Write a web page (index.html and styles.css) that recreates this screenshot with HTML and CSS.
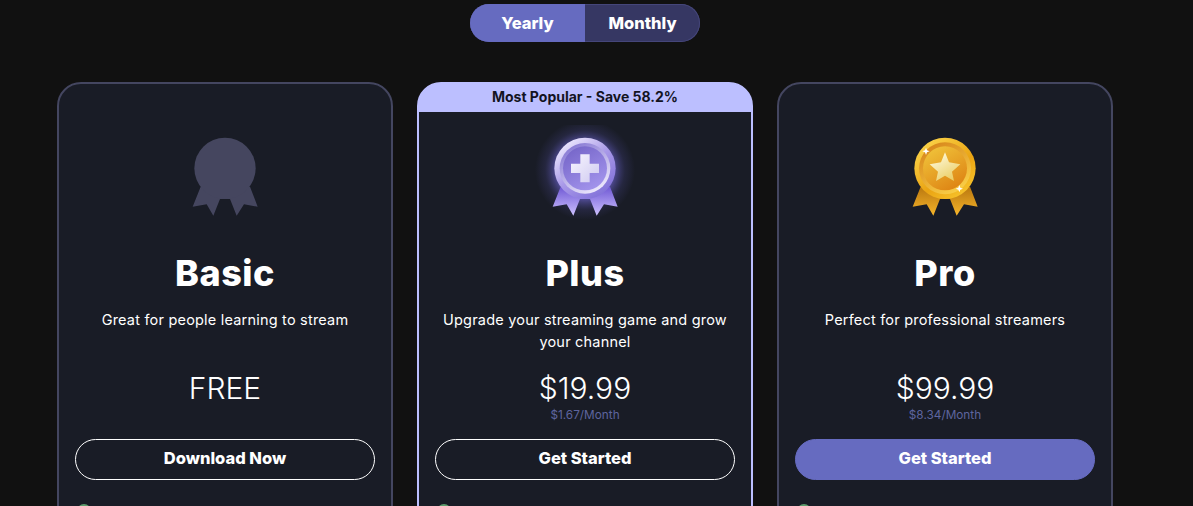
FILE: index.html
```html
<!DOCTYPE html>
<html lang="en">
<head>
<meta charset="utf-8">
<title>Pricing</title>
<link rel="stylesheet" href="styles.css">
</head>
<body>
<main class="page">
  <div class="toggle">
    <button class="toggle-btn active">Yearly</button>
    <button class="toggle-btn">Monthly</button>
  </div>
  <section class="cards">
    <article class="card">
      <svg class="medal" viewBox="0 0 330 300">
        <path fill="#45465f" d="M92 185 L68 245 L110 238 L130 272 L150 222 L180 222 L200 272 L222 238 L263 245 L240 185 Z"/>
        <circle cx="165" cy="130" r="92" fill="#45465f"/>
      </svg>
      <h2 class="name">Basic</h2>
      <p class="desc">Great for people learning to stream</p>
      <div class="price">FREE</div>
      <div class="sub"></div>
      <a class="cta">Download Now</a>
      <div class="feature"><span class="dot"></span></div>
    </article>
    <article class="card popular">
      <div class="banner">Most Popular - Save 58.2%</div>
      <svg class="medal" viewBox="0 0 330 300">
        <defs>
          <radialGradient id="glow"><stop offset="0.6" stop-color="#7d72f0" stop-opacity="0.5"/><stop offset="0.8" stop-color="#5a55b0" stop-opacity="0.18"/><stop offset="1" stop-color="#5a55b0" stop-opacity="0"/></radialGradient>
          <linearGradient id="rimP" x1="0.15" y1="0.05" x2="0.85" y2="0.95"><stop offset="0" stop-color="#f0ecff"/><stop offset="0.5" stop-color="#a898e8"/><stop offset="1" stop-color="#7f6fd8"/></linearGradient>
          <linearGradient id="innerP" x1="0.2" y1="0" x2="0.8" y2="1"><stop offset="0" stop-color="#7565c8"/><stop offset="1" stop-color="#a596ee"/></linearGradient>
          <linearGradient id="ringP" x1="0.2" y1="0" x2="0.8" y2="1"><stop offset="0" stop-color="#8374d2"/><stop offset="1" stop-color="#f4f0ff"/></linearGradient>
          <linearGradient id="ribP" x1="0" y1="0" x2="0" y2="1"><stop offset="0" stop-color="#6f58d4"/><stop offset="1" stop-color="#cdc1ff"/></linearGradient>
          <linearGradient id="plusP" x1="0" y1="0" x2="1" y2="1"><stop offset="0" stop-color="#f8f6ff"/><stop offset="1" stop-color="#cfc9f0"/></linearGradient>
        </defs>
        <circle cx="165" cy="135" r="150" fill="url(#glow)"/>
        <path fill="url(#ribP)" d="M92 185 L68 245 L110 238 L130 272 L150 222 L180 222 L200 272 L222 238 L263 245 L240 185 Z"/>
        <circle cx="165" cy="130" r="92" fill="url(#rimP)"/>
        <circle cx="165" cy="130" r="76" fill="url(#ringP)"/>
        <circle cx="165" cy="130" r="66" fill="url(#innerP)"/>
        <path fill="url(#plusP)" d="M151 88 H179 V116 H207 V144 H179 V172 H151 V144 H123 V116 H151 Z"/>
      </svg>
      <h2 class="name">Plus</h2>
      <p class="desc">Upgrade your streaming game and grow your channel</p>
      <div class="price">$19.99</div>
      <div class="sub">$1.67/Month</div>
      <a class="cta">Get Started</a>
      <div class="feature"><span class="dot"></span></div>
    </article>
    <article class="card">
      <svg class="medal" viewBox="0 0 330 300">
        <defs>
          <linearGradient id="rimG" x1="0.15" y1="0.05" x2="0.85" y2="0.95"><stop offset="0" stop-color="#fbd44a"/><stop offset="0.6" stop-color="#eaa413"/><stop offset="1" stop-color="#f8c52d"/></linearGradient>
          <linearGradient id="ringG" x1="0.2" y1="0" x2="0.8" y2="1"><stop offset="0" stop-color="#d6841a"/><stop offset="1" stop-color="#fbd34a"/></linearGradient>
          <linearGradient id="innerG" x1="0.2" y1="0" x2="0.8" y2="1"><stop offset="0" stop-color="#f0c33a"/><stop offset="1" stop-color="#dd8112"/></linearGradient>
          <linearGradient id="ribG" x1="0" y1="0" x2="0" y2="1"><stop offset="0" stop-color="#b9770f"/><stop offset="1" stop-color="#f6b52a"/></linearGradient>
          <linearGradient id="starG" x1="0.2" y1="0" x2="0.8" y2="1"><stop offset="0" stop-color="#fffbe0"/><stop offset="1" stop-color="#e9cb5d"/></linearGradient>
        </defs>
        <path fill="url(#ribG)" d="M92 185 L68 245 L110 238 L130 272 L150 222 L180 222 L200 272 L222 238 L263 245 L240 185 Z"/>
        <circle cx="165" cy="130" r="92" fill="url(#rimG)"/>
        <circle cx="165" cy="130" r="78" fill="url(#ringG)"/>
        <circle cx="165" cy="130" r="66" fill="url(#innerG)"/>
        <path fill="url(#starG)" d="M165 82 L177 112 L211 118 L186 140 L192 168 L165 152 L138 168 L144 140 L119 118 L153 112 Z"/>
        <path fill="#fff" d="M108 68 L111 76 L119 79 L111 82 L108 90 L105 82 L97 79 L105 76 Z M208 180 L211 188 L219 191 L211 194 L208 202 L205 194 L197 191 L205 188 Z"/>
      </svg>
      <h2 class="name">Pro</h2>
      <p class="desc">Perfect for professional streamers</p>
      <div class="price">$99.99</div>
      <div class="sub">$8.34/Month</div>
      <a class="cta primary">Get Started</a>
      <div class="feature"><span class="dot"></span></div>
    </article>
  </section>
</main>
</body>
</html>
```
FILE: styles.css
```css
* { box-sizing: border-box; }
html, body { height: 100%; }
body {
  margin: 0;
  background: #111111;
  color: #fff;
  font-family: Inter, "Liberation Sans", sans-serif;
  overflow: hidden;
}
.page {
  width: 1170px;
  height: 506px;
  overflow: hidden;
  display: flex;
  flex-direction: column;
  align-items: center;
  padding-top: 4px;
}
.toggle {
  display: flex;
  flex: none;
  width: 230px;
  height: 38px;
  border-radius: 19px;
  overflow: hidden;
  background: #363763;
  box-shadow: inset 0 0 0 1px #45467a;
}
.toggle-btn {
  flex: 1;
  border: 0;
  background: transparent;
  color: #fff;
  font: 800 16.5px Inter, sans-serif;
  padding: 0;
}
.toggle-btn.active { background: #666bc0; flex: 0 0 115px; }
.cards {
  display: flex;
  flex: none;
  gap: 24px;
  margin-top: 40px;
}
.card {
  width: 336px;
  height: 640px;
  flex: none;
  background: #191c26;
  border: 2px solid #444660;
  border-radius: 24px;
  padding: 41px 16px 0;
  display: flex;
  flex-direction: column;
  align-items: center;
  position: relative;
  overflow: hidden;
}
.popular {
  border-color: #bcbfff;
  background: linear-gradient(#bcbfff 28px, #191c26 28px);
}
.banner {
  position: absolute;
  top: -2px;
  left: -2px;
  right: -2px;
  height: 30px;
  color: #13141f;
  font-size: 14px;
  font-weight: 700;
  line-height: 30px;
  text-align: center;
}
.medal { width: 110px; height: 100px; display: block; flex: none; }
.name {
  margin: 21px 0 0;
  font-size: 36px;
  font-weight: 800;
  line-height: 54px;
  height: 54px;
  letter-spacing: 0.5px;
}
.desc {
  margin: 9px 0 0;
  height: 44px;
  font-size: 14.5px;
  line-height: 22px;
  letter-spacing: 0.2px;
  text-align: center;
}
.price {
  margin-top: 13px;
  font-size: 30px;
  font-weight: 300;
  line-height: 44px;
  height: 44px;
}
.sub {
  height: 16px;
  margin-top: -3px;
  font-size: 11.8px;
  line-height: 16px;
  color: #5e659f;
}
.cta {
  margin-top: 16px;
  width: 300px;
  height: 41px;
  flex: none;
  border: 1px solid #fff;
  border-radius: 21px;
  font-size: 16.5px;
  font-weight: 800;
  line-height: 37px;
  text-align: center;
}
.cta.primary { background: #666bc0; border-color: #666bc0; }
.feature { align-self: flex-start; margin-top: 24px; padding-left: 2px; }
.dot { display: block; width: 14px; height: 14px; border-radius: 50%; background: #5c9c6c; }
```
